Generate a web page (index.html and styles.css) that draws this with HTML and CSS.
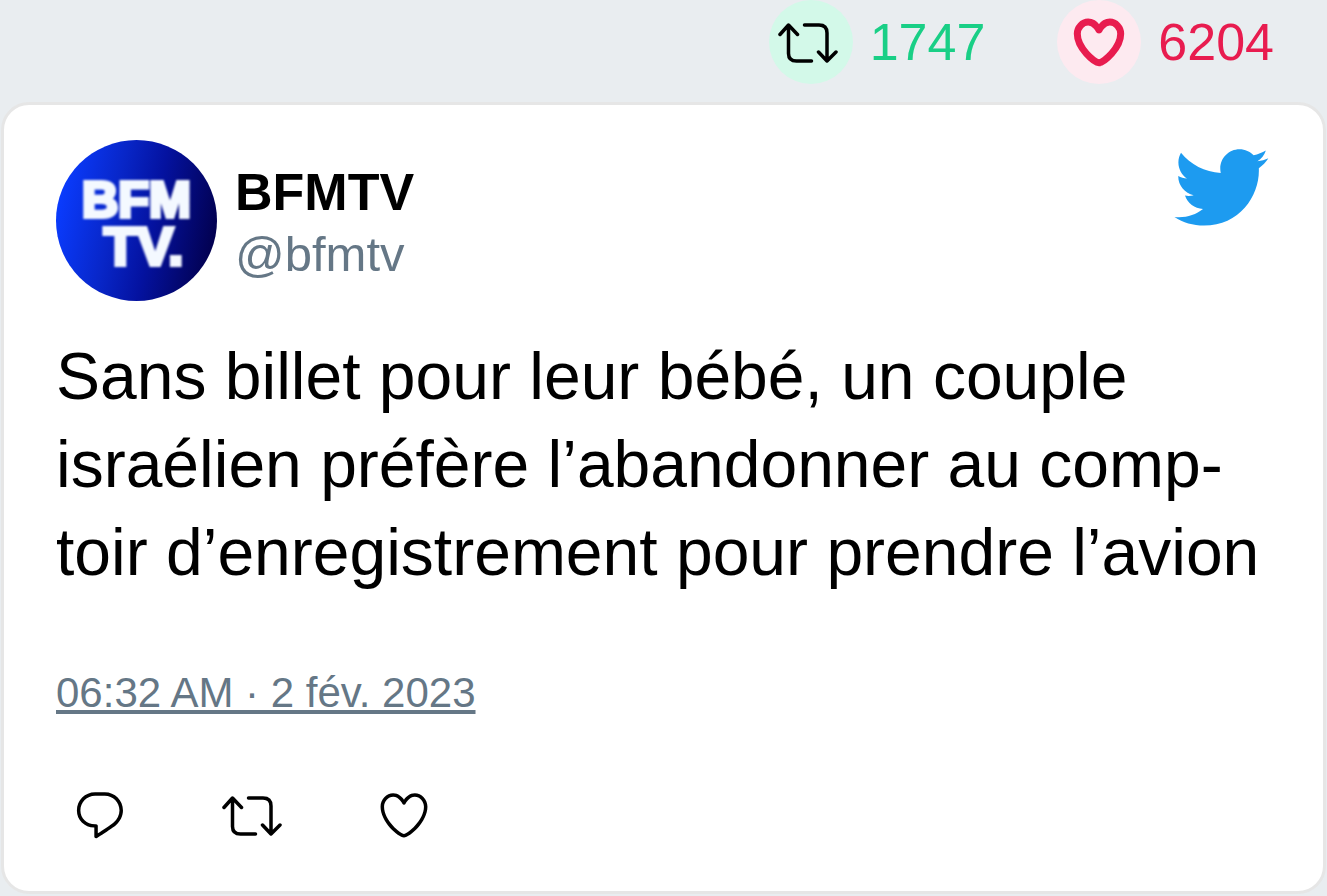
FILE: index.html
```
<!DOCTYPE html>
<html lang="fr">
<head>
<meta charset="utf-8">
<meta name="viewport" content="width=device-width, initial-scale=1">
<title>BFMTV</title>
<link rel="stylesheet" href="styles.css">
</head>
<body>
<svg class="symbols" aria-hidden="true">
  <symbol id="retweet" viewBox="0 -2 60 42">
    <path d="M2 11.5 10.5 2 19.500 11.500M10.500 2.500V30.500Q10.500 38 18.500 38H33.500M26.500 2H41Q49 2 49 10V38M40.500 29 49 38 58 29" fill="none" stroke="currentColor" stroke-width="3.500" stroke-linecap="round" stroke-linejoin="round"/>
  </symbol>
  <symbol id="heart" viewBox="0 0 24 24">
    <path fill="currentColor" d="M12 21.638h-.014C9.403 21.59 1.95 14.856 1.95 8.478c0-3.064 2.525-5.754 5.403-5.754 2.29 0 3.83 1.58 4.646 2.73.814-1.148 2.354-2.73 4.645-2.73 2.88 0 5.404 2.69 5.404 5.755 0 6.376-7.454 13.11-10.037 13.157H12zM7.354 4.225c-2.08 0-3.903 1.988-3.903 4.255 0 5.74 7.034 11.596 8.55 11.658 1.518-.062 8.55-5.917 8.55-11.658 0-2.267-1.823-4.255-3.903-4.255-2.528 0-3.94 2.936-3.952 2.965-.23.562-1.156.562-1.387 0-.014-.03-1.425-2.965-3.954-2.965z"/>
  </symbol>
</svg>

<header class="stats">
  <div class="stat stat-retweets">
    <span class="badge"><svg class="icon-retweet" aria-hidden="true"><use href="#retweet"/></svg></span>
    <span>1747</span>
  </div>
  <div class="stat stat-likes">
    <span class="badge"><svg class="icon heart-bold" aria-hidden="true"><use href="#heart"/></svg></span>
    <span>6204</span>
  </div>
</header>

<article class="card">
  <div class="author">
    <svg class="avatar" viewBox="0 0 160 160" role="img" aria-label="BFMTV">
      <defs>
        <linearGradient id="sky" x1="0" y1="0.400" x2="1" y2="0.600">
          <stop offset="0" stop-color="#0a3cff"/>
          <stop offset="0.350" stop-color="#0826c8"/>
          <stop offset="0.600" stop-color="#0412a0"/>
          <stop offset="1" stop-color="#02004e"/>
        </linearGradient>
      </defs>
      <circle cx="80" cy="80" r="80" fill="url(#sky)"/>
      <g class="avatar-text">
        <text x="80" y="77" font-size="50">BFM</text>
        <text x="87" y="124" font-size="54">TV.</text>
      </g>
    </svg>
    <div class="names">
      <a class="name" href="#bfmtv">BFMTV</a>
      <a class="handle" href="#bfmtv">@bfmtv</a>
    </div>
    <svg class="bird" viewBox="0.900 2.700 22.800 18.600" role="img" aria-label="Twitter">
      <path fill="#1d9bf0" d="M23.643 4.937c-.835.37-1.732.62-2.675.733.962-.576 1.7-1.49 2.048-2.578-.9.534-1.897.922-2.958 1.13-.85-.904-2.06-1.47-3.4-1.47-2.572 0-4.658 2.086-4.658 4.66 0 .364.042.718.12 1.06-3.873-.195-7.304-2.05-9.602-4.868-.4.69-.63 1.49-.63 2.342 0 1.616.823 3.043 2.072 3.878-.764-.025-1.482-.234-2.11-.583v.06c0 2.257 1.605 4.14 3.737 4.568-.392.106-.803.162-1.227.162-.3 0-.593-.028-.877-.082.593 1.85 2.313 3.198 4.352 3.234-1.595 1.25-3.604 1.995-5.786 1.995-.376 0-.747-.022-1.112-.065 2.062 1.323 4.51 2.093 7.14 2.093 8.57 0 13.255-7.098 13.255-13.254 0-.2-.005-.402-.014-.602.91-.658 1.7-1.477 2.323-2.41z"/>
    </svg>
  </div>

  <p class="message">Sans billet pour leur bébé, un couple israélien préfère l’abandonner au comp&shy;toir d’enregistrement pour prendre l’avion</p>

  <a class="date" href="#tweet">06:32 AM · 2 fév. 2023</a>

  <div class="actions">
    <button type="button" aria-label="Répondre"><svg class="icon" viewBox="0 0 24 24"><path fill="currentColor" d="M14.046 2.242l-4.148-.01h-.002c-4.374 0-7.8 3.427-7.8 7.802 0 4.098 3.186 7.206 7.465 7.37v3.828c0 .108.044.286.12.403.142.225.384.347.632.347.138 0 .277-.038.402-.118.264-.168 6.473-4.14 8.088-5.506 1.902-1.61 3.04-3.97 3.043-6.312v-.017c-.006-4.367-3.43-7.787-7.8-7.788zm3.787 12.972c-1.134.96-4.862 3.405-6.772 4.643V16.67c0-.414-.335-.75-.75-.75h-.396c-3.66 0-6.318-2.476-6.318-5.886 0-3.534 2.768-6.302 6.3-6.302l4.147.01h.002c3.532 0 6.3 2.766 6.302 6.296-.003 1.91-.942 3.844-2.514 5.176z"/></svg></button>
    <button type="button" aria-label="Retweeter"><svg class="icon-retweet"><use href="#retweet"/></svg></button>
    <button type="button" aria-label="J’aime"><svg class="icon"><use href="#heart"/></svg></button>
  </div>
</article>
</body>
</html>
```
FILE: styles.css
```
* {
  box-sizing: border-box;
}

body {
  margin: 0;
  background: #e9edf0;
  color: #000;
  font-family: "Liberation Sans", Arial, sans-serif;
}

.symbols {
  display: none;
}

.stats {
  display: flex;
  justify-content: flex-end;
  gap: 72px;
  padding: 0 53px 18px;
  font-size: 52px;
  line-height: 84px;
}

.stat {
  display: flex;
  align-items: center;
  gap: 17px;
}

.stat-retweets {
  color: #19cf86;
}

.stat-likes {
  color: #e81c4f;
}

.badge {
  display: flex;
  align-items: center;
  justify-content: center;
  width: 84px;
  height: 84px;
  border-radius: 50%;
}

.stat-retweets .badge {
  padding-right: 6px;
  background: #d3f9e9;
  color: #000;
}

.stat-likes .badge {
  background: #fdeaf0;
}

.icon {
  display: block;
  width: 56px;
  height: 56px;
}

.icon-retweet {
  display: block;
  width: 60px;
  height: 42px;
}

.heart-bold {
  stroke: currentColor;
  stroke-width: 1.5;
}

.card {
  margin: 0 1px 1px;
  padding: 35px 52px 48px;
  border: 3px solid #e6e6e6;
  border-radius: 28px;
  background: #fff;
}

.author {
  display: flex;
  align-items: center;
  gap: 18px;
}

.avatar {
  width: 161px;
  height: 161px;
}

.avatar-text {
  fill: #f4f9ff;
  stroke: #f4f9ff;
  stroke-width: 4;
  font-weight: 700;
  text-anchor: middle;
  filter: blur(1px);
}

.names {
  display: flex;
  flex: 1;
  flex-direction: column;
  padding-top: 4px;
}

.names a {
  text-decoration: none;
}

.name {
  color: #000;
  font-size: 52px;
  font-weight: 700;
  line-height: 62px;
}

.handle {
  color: #657786;
  font-size: 49px;
  line-height: 62px;
}

.bird {
  align-self: flex-start;
  width: 95px;
  height: 77px;
  margin: 9px 2px 0 0;
}

.message {
  margin: 31px 0 73px;
  font-size: 66px;
  line-height: 88px;
}

.date {
  display: block;
  width: fit-content;
  color: #657786;
  font-size: 42px;
  line-height: 48px;
}

.actions {
  display: flex;
  align-items: center;
  gap: 94px;
  margin-top: 70px;
  padding-left: 16px;
}

.actions button {
  padding: 0;
  border: 0;
  background: none;
  color: #000;
}
```
